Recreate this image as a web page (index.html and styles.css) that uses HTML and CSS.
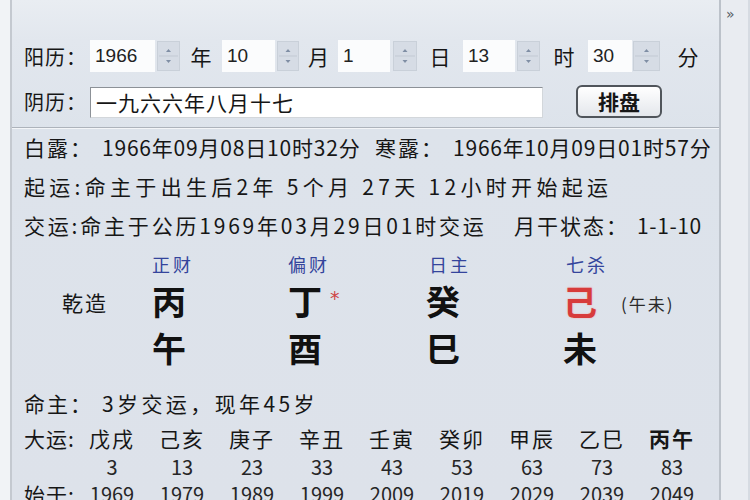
FILE: index.html
```html
<!DOCTYPE html>
<html lang="zh-CN">
<head>
<meta charset="utf-8">
<title>排盘</title>
<link rel="stylesheet" href="styles.css">
</head>
<body>
<div class="window">
  <div class="gutter"></div>
  <div class="panel">
    <div class="form">
      <div class="row row-solar">
        <span class="lbl">阳历：</span>
        <span class="field f-year">1966</span>
        <span class="spin s-year"><svg width="23" height="30" viewBox="0 0 23 30"><rect x="0.5" y="0.5" width="22" height="29" fill="#d6dce5" stroke="#c9d0d9"/><line x1="2" y1="15" x2="21" y2="15" stroke="#c2c9d3"/><path d="M9 11 L11.5 8 L14 11 Z" fill="#7f8ea4"/><path d="M9 19 L11.5 22 L14 19 Z" fill="#7f8ea4"/></svg></span>
        <span class="unit u-year">年</span>
        <span class="field f-month">10</span>
        <span class="spin s-month"><svg width="22" height="30" viewBox="0 0 22 30"><rect x="0.5" y="0.5" width="21" height="29" fill="#d6dce5" stroke="#c9d0d9"/><line x1="2" y1="15" x2="20" y2="15" stroke="#c2c9d3"/><path d="M8.5 11 L11 8 L13.5 11 Z" fill="#7f8ea4"/><path d="M8.5 19 L11 22 L13.5 19 Z" fill="#7f8ea4"/></svg></span>
        <span class="unit u-month">月</span>
        <span class="field f-day">1</span>
        <span class="spin s-day"><svg width="24" height="30" viewBox="0 0 24 30"><rect x="0.5" y="0.5" width="23" height="29" fill="#d6dce5" stroke="#c9d0d9"/><line x1="2" y1="15" x2="22" y2="15" stroke="#c2c9d3"/><path d="M9.5 11 L12 8 L14.5 11 Z" fill="#7f8ea4"/><path d="M9.5 19 L12 22 L14.5 19 Z" fill="#7f8ea4"/></svg></span>
        <span class="unit u-day">日</span>
        <span class="field f-hour">13</span>
        <span class="spin s-hour"><svg width="23" height="30" viewBox="0 0 23 30"><rect x="0.5" y="0.5" width="22" height="29" fill="#d6dce5" stroke="#c9d0d9"/><line x1="2" y1="15" x2="21" y2="15" stroke="#c2c9d3"/><path d="M9 11 L11.5 8 L14 11 Z" fill="#7f8ea4"/><path d="M9 19 L11.5 22 L14 19 Z" fill="#7f8ea4"/></svg></span>
        <span class="unit u-hour">时</span>
        <span class="field f-min">30</span>
        <span class="spin s-min"><svg width="27" height="30" viewBox="0 0 27 30"><rect x="0.5" y="0.5" width="26" height="29" fill="#d6dce5" stroke="#c9d0d9"/><line x1="2" y1="15" x2="25" y2="15" stroke="#c2c9d3"/><path d="M11 11 L13.5 8 L16 11 Z" fill="#7f8ea4"/><path d="M11 19 L13.5 22 L16 19 Z" fill="#7f8ea4"/></svg></span>
        <span class="unit u-min">分</span>
      </div>
      <div class="row row-lunar">
        <span class="lbl">阴历：</span>
        <span class="lunar-input">一九六六年八月十七</span>
        <span class="btn">排盘</span>
      </div>
    </div>
    <div class="result">
      <div class="line">
        <span class="seg seg-a"><span class="term">白露：</span><span class="date">1966年09月08日10时32分</span></span>
        <span class="seg"><span class="term">寒露：</span><span class="date">1966年10月09日01时57分</span></span>
      </div>
      <div class="line line-qy">起运:命主于出生后2年 5个月 27天 12小时开始起运</div>
      <div class="line">
        <span class="jy">交运:命主于公历1969年03月29日01时交运</span>
        <span class="yg">月干状态：<span class="yg-val">1-1-10</span></span>
      </div>
      <div class="chart">
        <div class="qz-col"><div class="qz">乾造</div></div>
        <div class="pillar p1"><div class="god">正财</div><div class="stem">丙</div><div class="branch">午</div></div>
        <div class="pillar p2"><div class="god">偏财</div><div class="stem">丁<span class="star">*</span></div><div class="branch">酉</div></div>
        <div class="pillar p3"><div class="god">日主</div><div class="stem">癸</div><div class="branch">巳</div></div>
        <div class="pillar p4"><div class="god">七杀</div><div class="stem"><span class="red">己</span><span class="note">(午未)</span></div><div class="branch">未</div></div>
      </div>
      <div class="line-mz"><span class="term">命主：</span><span class="mz-val">3岁交运，现年45岁</span></div>
      <div class="luck">
        <div class="l-lbl">大运:</div>
        <div class="gz">戊戌</div><div class="gz">己亥</div><div class="gz">庚子</div><div class="gz">辛丑</div><div class="gz">壬寅</div><div class="gz">癸卯</div><div class="gz">甲辰</div><div class="gz">乙巳</div><div class="gz cur">丙午</div>
        <div class="l-lbl"></div>
        <div class="num">3</div><div class="num">13</div><div class="num">23</div><div class="num">33</div><div class="num">43</div><div class="num">53</div><div class="num">63</div><div class="num">73</div><div class="num">83</div>
        <div class="l-lbl l-last">始于:</div>
        <div class="num yr">1969</div><div class="num yr">1979</div><div class="num yr">1989</div><div class="num yr">1999</div><div class="num yr">2009</div><div class="num yr">2019</div><div class="num yr">2029</div><div class="num yr">2039</div><div class="num yr">2049</div>
      </div>
    </div>
  </div>
  <div class="side"><span class="more">»</span></div>
</div>
</body>
</html>
```

FILE: styles.css
```css
* { box-sizing: border-box; }
html, body { margin: 0; padding: 0; }
body {
  width: 750px;
  height: 500px;
  overflow: hidden;
  background: #eef1f5;
  font-family: "Noto Sans CJK SC", "Noto Sans", sans-serif;
  color: #161616;
}
.window { display: flex; height: 500px; }
.gutter {
  width: 12px;
  background: #f1f3f6;
  border-right: 2px solid #c4c9d0;
}
.panel {
  width: 709px;
  background: linear-gradient(#e9edf2 0, #e2e7ee 40px, #dde3eb 130px, #dde2ea 100%);
  border-right: 2px solid #bcc2ca;
  overflow: hidden;
}
.side {
  flex: 1;
  background: #e9ecf1;
  border-right: 2px solid #d6dbe2;
  padding: 0 0 0 5px;
}
.more { font-family: "DejaVu Sans", sans-serif; font-size: 14px; color: #555b63; line-height: 20px; }

/* form */
.form {
  padding: 40px 0 9px 12px;
  border-bottom: 1px solid #adb3bb;
  box-shadow: 0 1px 0 #f3f5f8;
}
.row { display: flex; align-items: center; }
.row-solar { height: 32px; }
.lbl { width: 66px; font-size: 20px; letter-spacing: 1px; white-space: nowrap; }
.field {
  height: 32px;
  background: #fbfcfd;
  font-family: "Liberation Sans", sans-serif;
  font-size: 19px;
  line-height: 32px;
  padding-left: 5px;
  color: #222;
}
.f-year { width: 65px; }
.f-month { width: 53px; }
.f-day { width: 52px; }
.f-hour { width: 52px; }
.f-min { width: 44px; }
.spin { display: flex; margin-left: 2px; }
.s-day { margin-left: 3px; }
.s-min { margin-left: 1px; }
.unit { font-size: 21px; text-align: center; }
.u-year { width: 42px; }
.u-month { width: 39px; }
.u-day { width: 46px; }
.u-hour { width: 48px; }
.u-min { width: 44px; padding-left: 12px; }

.row-lunar { height: 34px; margin-top: 12px; }
.lunar-input {
  width: 453px;
  height: 31px;
  background: #ffffff;
  border: 1px solid;
  border-color: #8c9197 #d3d7db #d3d7db #8c9197;
  font-size: 21px;
  letter-spacing: 1px;
  line-height: 29px;
  padding-left: 5px;
  margin-top: 2px;
}
.btn {
  width: 86px;
  height: 33px;
  margin-left: 33px;
  border: 2px solid #50555b;
  border-radius: 6px;
  background: linear-gradient(#ffffff, #e4e7ec);
  font-size: 21px;
  font-weight: bold;
  text-align: center;
  line-height: 28px;
}

/* result */
.result { padding-left: 12px; }
.line {
  display: flex;
  height: 39px;
  line-height: 39px;
  font-size: 21px;
  white-space: nowrap;
}
.seg-a { width: 351px; }
.term { letter-spacing: 2px; }
.date { margin-left: 9px; letter-spacing: 0.8px; }
.line-qy { letter-spacing: 4.3px; display: block; }
.jy { width: 490px; letter-spacing: 2.8px; }
.yg { letter-spacing: 2px; }
.yg-val { margin-left: 8px; letter-spacing: 0.6px; }

.chart { display: flex; margin-top: 9px; }
.qz-col { width: 128px; padding-top: 28px; }
.qz { padding-left: 38px; height: 40px; line-height: 40px; font-size: 21px; letter-spacing: 2px; }
.pillar { display: flex; flex-direction: column; }
.p1 { width: 136px; }
.p2 { width: 138px; }
.p3 { width: 137px; }
.p4 { flex: 1; }
.god {
  height: 22px;
  line-height: 20px;
  font-size: 18px;
  letter-spacing: 3px;
  color: #34449c;
}
.p3 .god, .p4 .god { padding-left: 3px; }
.stem, .branch {
  height: 40px;
  line-height: 40px;
  font-size: 34px;
  font-weight: bold;
  color: #111;
  white-space: nowrap;
}
.stem { margin-top: 5px; }
.branch { margin-top: 7px; }
.star {
  font-family: "DejaVu Sans", sans-serif;
  font-size: 19px;
  line-height: 0;
  font-weight: normal;
  color: #cf4545;
  vertical-align: 10px;
  margin-left: 8px;
}
.red { color: #d73b3b; text-shadow: 0 0 2px #f0a5a5; }
.note {
  font-size: 17px;
  line-height: 0;
  font-weight: normal;
  margin-left: 24px;
  letter-spacing: 2px;
  vertical-align: 4px;
  color: #2a2a2a;
}

.line-mz {
  margin-top: 20px;
  height: 30px;
  line-height: 30px;
  font-size: 21px;
  white-space: nowrap;
}
.mz-val { margin-left: 9px; letter-spacing: 3.4px; }

.luck {
  display: grid;
  grid-template-columns: 42px repeat(9, 48px);
  grid-template-rows: 30px 28px 26px;
  column-gap: 22px;
  margin-top: 5px;
  font-size: 20px;
}
.l-lbl { white-space: nowrap; line-height: 30px; letter-spacing: 1px; font-size: 21px; }
.l-last { line-height: 26px; }
.gz { text-align: center; line-height: 30px; white-space: nowrap; letter-spacing: 2px; font-size: 21px; }
.cur { font-weight: bold; }
.num { text-align: center; line-height: 28px; color: #262626; }
.yr { line-height: 26px; }
```
